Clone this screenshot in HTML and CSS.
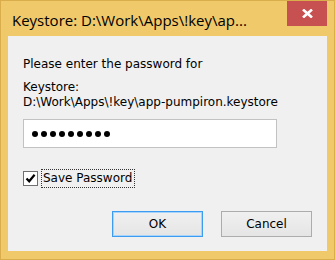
FILE: index.html
```html
<!DOCTYPE html>
<html lang="en">
<head>
    <meta charset="UTF-8">
    <title>Keystore</title>
    <link rel="stylesheet" href="styles.css">
</head>
<body>

    <div class="window">
        <!-- Title bar -->
        <div class="title-bar">
            <span class="title">Keystore: D:\Work\Apps\!key\ap...</span>
            <button class="close-btn" aria-label="Close">
                <svg width="11" height="9" viewBox="0 0 11 9">
                    <path d="M1 0.5 L10 8.5 M10 0.5 L1 8.5" stroke="#fff" stroke-width="2.6" fill="none"/>
                </svg>
            </button>
        </div>

        <!-- Client area -->
        <div class="client">
            <p class="prompt">Please enter the password for</p>
            <p class="keystore">Keystore:<br>D:\Work\Apps\!key\app-pumpiron.keystore</p>

            <div class="password-box">
                <span class="dot"></span><span class="dot"></span><span class="dot"></span>
                <span class="dot"></span><span class="dot"></span><span class="dot"></span>
                <span class="dot"></span><span class="dot"></span><span class="dot"></span>
            </div>

            <label class="save-row">
                <span class="check-box">
                    <svg width="11" height="11" viewBox="0 0 11 11">
                        <path d="M1.5 5.5 L4.2 8.3 L9.6 1.8" stroke="#000" stroke-width="2.2" fill="none"/>
                    </svg>
                </span>
                <span class="save-label">Save Password</span>
            </label>

            <div class="actions">
                <button class="btn btn-default">OK</button>
                <button class="btn">Cancel</button>
            </div>
        </div>
    </div>

</body>
</html>
```

FILE: styles.css
```css
:root {
    --frame: #f0c96b;
    --frame-edge: #d9ac4c;
    --client: #f0f0f0;
    --close: #c75050;
    --text: #000;
}

* {
    margin: 0;
    padding: 0;
    box-sizing: border-box;
}

body {
    width: 335px;
    height: 260px;
    overflow: hidden;
    font-family: "DejaVu Sans", Tahoma, sans-serif;
    color: var(--text);
}

.window {
    width: 335px;
    height: 260px;
    background: var(--frame);
    border: 1px solid var(--frame-edge);
    padding: 0 7px 8px 7px;
    display: flex;
    flex-direction: column;
}

.title-bar {
    height: 35px;
    display: flex;
    align-items: flex-start;
    flex-shrink: 0;
}

.title {
    font-family: "Open Sans", sans-serif;
    font-size: 15px;
    line-height: 20px;
    margin-top: 9px;
    padding-left: 4px;
    white-space: nowrap;
}

.close-btn {
    margin-left: auto;
    width: 40px;
    height: 25px;
    background: var(--close);
    border: none;
    display: flex;
    align-items: center;
    justify-content: center;
}

.client {
    flex: 1;
    background: var(--client);
    padding: 21px 15px 14px 15px;
    display: flex;
    flex-direction: column;
    font-size: 12px;
    line-height: 15px;
}

.keystore {
    margin-top: 8px;
    white-space: nowrap;
}

.password-box {
    margin-top: 9px;
    width: 254px;
    height: 29px;
    background: #fff;
    border: 1px solid #c2c2c2;
    display: flex;
    align-items: center;
    gap: 3px;
    padding-left: 8px;
}

.dot {
    width: 6px;
    height: 6px;
    border-radius: 50%;
    background: #000;
}

.save-row {
    margin-top: 21px;
    display: flex;
    align-items: center;
    gap: 3px;
    height: 18px;
}

.check-box {
    width: 15px;
    height: 15px;
    background: #fff;
    border: 1px solid #707070;
    display: flex;
    align-items: center;
    justify-content: center;
}

.save-label {
    border: 1px dotted #333;
    padding: 1px 2px 1px 1px;
    line-height: 15px;
}

.actions {
    margin-top: auto;
    display: flex;
    justify-content: flex-end;
    gap: 18px;
}

.btn {
    width: 91px;
    height: 26px;
    font-family: "DejaVu Sans", Tahoma, sans-serif;
    font-size: 12px;
    color: var(--text);
    background: linear-gradient(#f0f0f0, #e5e5e5);
    border: 1px solid #acacac;
}

.btn-default {
    border-color: #3c9cf2;
    box-shadow: inset 0 0 0 1px #a8d4fb;
}
```
